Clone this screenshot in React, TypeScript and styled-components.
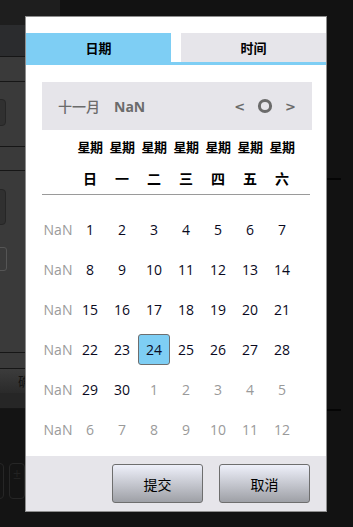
import React from 'react';
import styled, { createGlobalStyle } from 'styled-components';

const GlobalStyle = createGlobalStyle`
  html, body {
    margin: 0;
    padding: 0;
    width: 353px;
    height: 527px;
    overflow: hidden;
    background: #121212;
    font-family: 'Open Sans', 'Noto Sans CJK SC', sans-serif;
  }
  * {
    box-sizing: border-box;
  }
`;

type DayCell = { day: number; current: boolean };

const buildWeeks = (): DayCell[][] => {
  const cells: DayCell[] = [];
  for (let d = 1; d <= 30; d++) cells.push({ day: d, current: true });
  for (let d = 1; cells.length < 42; d++) cells.push({ day: d, current: false });
  const weeks: DayCell[][] = [];
  for (let i = 0; i < 42; i += 7) weeks.push(cells.slice(i, i + 7));
  return weeks;
};

const weekdays = ['日', '一', '二', '三', '四', '五', '六'];

export default function App() {
  const weeks = buildWeeks();
  const selected = 24;

  return (
    <>
      <GlobalStyle />
      <Page>
        <LeftPanel>
          <TopStrip />
          <Band $bg="#2b2c2e" $h={32} />
          <Band $bg="#3a3a3a" $h={25} />
          <Band $bg="#3a3a3a" $h={65}>
            <GhostButton $top={17} $h={27} />
          </Band>
          <Band $bg="#3a3a3a" $h={24} />
          <Band $bg="#3a3a3a" $h={182}>
            <GhostButton $top={18} $h={36} />
            <GhostInput />
          </Band>
          <Band $bg="#3a3a3a" $h={16} />
          <Stripe>确</Stripe>
          <Band $bg="#262626" $h={16} />
          <BottomArea>
            <IconBox />
            <IconBox>±</IconBox>
          </BottomArea>
        </LeftPanel>
        <RightRail>
          <RailLine $top={178} />
          <RailLine $top={229} />
        </RightRail>
      </Page>

      <Dialog>
        <Tabs>
          <Tab $active>日期</Tab>
          <Tab>时间</Tab>
        </Tabs>

        <Body>
          <MonthBar>
            <MonthLabel>十一月</MonthLabel>
            <YearLabel>NaN</YearLabel>
            <Nav>
              <NavArrow>&lt;</NavArrow>
              <svg width="16" height="16" viewBox="0 0 16 16">
                <circle cx="8" cy="8" r="5.6" fill="none" stroke="#6b6b6b" strokeWidth="3" />
              </svg>
              <NavArrow>&gt;</NavArrow>
            </Nav>
          </MonthBar>

          <WeekHead>
            <Grid>
              <span />
              {weekdays.map((w) => (
                <HeadCell key={`a_${w}`}>星期</HeadCell>
              ))}
            </Grid>
            <Grid>
              <span />
              {weekdays.map((w) => (
                <HeadCell key={`b_${w}`} $big>
                  {w}
                </HeadCell>
              ))}
            </Grid>
          </WeekHead>

          <Days>
            {weeks.map((week, i) => (
              <DayRow key={i}>
                <WeekNo>NaN</WeekNo>
                {week.map((c, j) => (
                  <Day
                    key={j}
                    $muted={!c.current}
                    $selected={c.current && c.day === selected}
                  >
                    {c.day}
                  </Day>
                ))}
              </DayRow>
            ))}
          </Days>
        </Body>

        <Footer>
          <ActionButton>提交</ActionButton>
          <ActionButton>取消</ActionButton>
        </Footer>
      </Dialog>
    </>
  );
}

const Page = styled.div`
  display: flex;
  justify-content: space-between;
  width: 353px;
  height: 527px;
  background: #121212;
`;

const LeftPanel = styled.div`
  display: flex;
  flex-direction: column;
  width: 60px;
  overflow: hidden;
`;

const TopStrip = styled.div`
  height: 25px;
  background: #1e1e1e;
`;

const Band = styled.div<{ $bg: string; $h: number }>`
  position: relative;
  height: ${(p) => p.$h}px;
  background: ${(p) => p.$bg};
  border-bottom: 1px solid #161616;
  flex-shrink: 0;
`;

const GhostButton = styled.div<{ $top: number; $h: number }>`
  margin-top: ${(p) => p.$top}px;
  margin-left: -10px;
  width: 16px;
  height: ${(p) => p.$h}px;
  background: #303030;
  border: 1px solid #262626;
  border-radius: 4px;
`;

const GhostInput = styled.div`
  margin-top: 22px;
  margin-left: -10px;
  width: 17px;
  height: 24px;
  border: 1px solid #555;
  border-radius: 3px;
`;

const Stripe = styled.div`
  height: 24px;
  padding-left: 18px;
  background: linear-gradient(#3c3c3c, #2a2a2a);
  color: #111;
  font-size: 13px;
  line-height: 24px;
  font-family: 'Noto Sans CJK SC', sans-serif;
  flex-shrink: 0;
`;

const BottomArea = styled.div`
  flex: 1;
  display: flex;
  gap: 5px;
  padding-top: 54px;
  margin-left: -12px;
  background: #141414;
`;

const IconBox = styled.div`
  width: 16px;
  height: 36px;
  border: 1px solid #262626;
  border-radius: 4px;
  color: #222;
  font-size: 14px;
  text-align: center;
`;

const RightRail = styled.div`
  width: 26px;
  padding-right: 12px;
  display: flex;
  flex-direction: column;
`;

const RailLine = styled.div<{ $top: number }>`
  margin-top: ${(p) => p.$top}px;
  height: 2px;
  background: #050505;
`;

const Dialog = styled.div`
  position: absolute;
  left: 25px;
  top: 16px;
  width: 302px;
  height: 496px;
  border: 1px solid #8e8e8e;
  background: #fff;
  display: flex;
  flex-direction: column;
  padding-top: 16px;
`;

const Tabs = styled.div`
  display: flex;
  justify-content: space-between;
  border-bottom: 3px solid #7ecef4;
`;

const Tab = styled.div<{ $active?: boolean }>`
  width: 145px;
  height: 29px;
  line-height: 29px;
  text-align: center;
  font-family: 'Noto Sans CJK SC', sans-serif;
  font-weight: 700;
  font-size: 13px;
  color: #000;
  background: ${(p) => (p.$active ? '#7ecef4' : '#e6e5ea')};
`;

const Body = styled.div`
  padding: 17px 14px 0 16px;
`;

const MonthBar = styled.div`
  display: flex;
  align-items: center;
  height: 48px;
  padding: 0 16px;
  background: #e6e5ea;
  color: #6b6b6b;
  font-weight: 600;
  font-size: 14px;
`;

const MonthLabel = styled.span`
  font-family: 'Noto Sans CJK SC', sans-serif;
  font-weight: 500;
`;

const YearLabel = styled.span`
  margin-left: 14px;
  font-family: 'Open Sans', sans-serif;
  font-weight: 700;
`;

const Nav = styled.div`
  margin-left: auto;
  display: flex;
  align-items: center;
  gap: 12px;
`;

const NavArrow = styled.span`
  font-family: 'DejaVu Sans', sans-serif;
  font-size: 13px;
  font-weight: 700;
  color: #6b6b6b;
`;

const WeekHead = styled.div`
  width: 268px;
  border-bottom: 1px solid #9a9a9a;
`;

const Grid = styled.div`
  display: grid;
  grid-template-columns: repeat(8, 32px);
  height: 32px;
  align-items: center;
`;

const HeadCell = styled.span<{ $big?: boolean }>`
  text-align: center;
  font-family: 'Noto Sans CJK SC', sans-serif;
  font-weight: 700;
  font-size: ${(p) => (p.$big ? 14 : 13)}px;
  color: #000;
  white-space: nowrap;
  letter-spacing: ${(p) => (p.$big ? 0 : -0.5)}px;
`;

const Days = styled.div`
  padding-top: 14px;
`;

const DayRow = styled.div`
  display: grid;
  grid-template-columns: repeat(8, 32px);
  height: 40px;
  align-items: center;
`;

const WeekNo = styled.span`
  text-align: center;
  font-size: 14px;
  color: #9a9a9a;
`;

const Day = styled.span<{ $muted?: boolean; $selected?: boolean }>`
  height: 31px;
  line-height: 29px;
  text-align: center;
  font-size: 14px;
  color: ${(p) => (p.$muted ? '#9a9a9a' : '#0a0a1e')};
  background: ${(p) => (p.$selected ? '#7ecef4' : 'transparent')};
  border: 1px solid ${(p) => (p.$selected ? '#6e6e6e' : 'transparent')};
  border-radius: 3px;
`;

const Footer = styled.div`
  margin-top: auto;
  height: 55px;
  background: #e6e5ea;
  display: flex;
  justify-content: flex-end;
  align-items: flex-start;
  gap: 16px;
  padding: 8px 16px 0 0;
`;

const ActionButton = styled.button`
  width: 91px;
  height: 39px;
  border: 1px solid #6e6e6e;
  border-radius: 3px;
  background: linear-gradient(#eef0fa, #9ea0a6);
  font-family: 'Noto Sans CJK SC', sans-serif;
  font-size: 14px;
  color: #000;
  padding: 0;
`;
